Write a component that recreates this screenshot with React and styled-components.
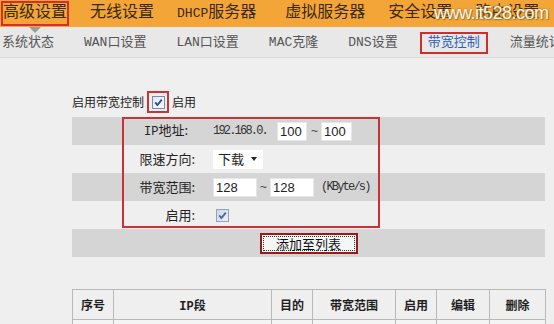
import React from 'react'
import styled, { createGlobalStyle } from 'styled-components'

const mono = `"Liberation Mono", "Noto Sans CJK SC", monospace`
const cjk = `"Noto Sans CJK SC", sans-serif`

const Global = createGlobalStyle`
  html, body { margin: 0; padding: 0; overflow: hidden; }
  body { background: #efefef; font-family: ${cjk}; }
`

const TopBar = styled.div`
  position: relative;
  height: 27px;
  background: #f4a537;
  display: flex;
  align-items: center;
  gap: 19px;
  padding-left: 1px;
  font-family: ${mono};
  font-size: 16px;
  line-height: 19px;
  color: #3a2912;
  white-space: nowrap;
  overflow: hidden;
`

const TopItem = styled.div`
  border: 2px solid ${p => (p.$active ? '#d3302b' : 'transparent')};
  padding: 1px 0;
  margin-right: ${p => p.$mr || 0}px;
`

const Lat = styled.span`
  font-family: "Liberation Mono", monospace;
  font-size: ${p => p.$size || 13}px;
`

const Watermark = styled.div`
  position: absolute;
  left: 434px;
  top: 4px;
  font-family: "Liberation Sans", sans-serif;
  font-size: 18px;
  color: #fff7e8;
  text-shadow: 0 0 2px #9a6a20, 1px 1px 1px #b07a2a;
  letter-spacing: -0.5px;
`

const SubBar = styled.div`
  position: relative;
  height: 31px;
  box-sizing: border-box;
  background: #e8e8e8;
  border-bottom: 1px solid #d8d8d8;
  display: flex;
  align-items: center;
  gap: 30px;
  padding-left: 2px;
  padding-top: 2px;
  font-family: ${mono};
  font-size: 13px;
  line-height: 16px;
  color: #555;
  white-space: nowrap;
  overflow: hidden;
`

const Pointer = styled.div`
  position: absolute;
  left: 29px;
  top: 0;
  width: 0;
  height: 0;
  border-left: 6px solid transparent;
  border-right: 6px solid transparent;
  border-top: 6px solid #9c9c9c;
`

const SubItem = styled.div`
  ${p =>
    p.$active &&
    `
    color: #2f5fb8;
    border: 2px solid #cf2e2e;
    padding: 1px 6px;
    margin: 0 -8px;
  `}
`

const Main = styled.div`
  padding: 0 9px 0 72px;
  font-size: 12px;
  color: #222;
`

const EnableLine = styled.div`
  margin-top: 33px;
  height: 22px;
  display: flex;
  align-items: center;
  font-size: 12px;
  line-height: 14px;
`

const RedFrame = styled.div`
  display: flex;
  align-items: center;
  justify-content: center;
  width: 22px;
  height: 22px;
  box-sizing: border-box;
  border: 2px solid #cc3434;
  margin: 0 3px;
`

const Rows = styled.div`
  position: relative;
  margin-top: 4px;
`

const Row = styled.div`
  height: 28px;
  display: flex;
  align-items: center;
  justify-content: ${p => (p.$center ? 'center' : 'flex-start')};
  background: ${p => (p.$shade ? '#d5d5d5' : 'transparent')};
`

const Label = styled.div`
  width: 123px;
  text-align: right;
  padding-right: ${p => p.$pr || 0}px;
  box-sizing: border-box;
  font-size: 13px;
  line-height: 16px;
  color: #222;
  flex: none;
`

const Value = styled.div`
  margin-left: ${p => p.$ml || 18}px;
  display: flex;
  align-items: center;
`

const Small = styled.span`
  font-family: "Liberation Mono", monospace;
  font-size: 12px;
  letter-spacing: -1.8px;
  color: #333;
  margin-left: ${p => p.$ml || 0}px;
`

const Input = styled.div`
  width: ${p => p.$w}px;
  height: 19px;
  background: #fff;
  box-sizing: border-box;
  border: 1px solid #e6e6e6;
  font-family: "Liberation Sans", sans-serif;
  font-size: 13px;
  line-height: 17px;
  padding-left: 2px;
  color: #222;
  margin-left: ${p => p.$ml || 0}px;
`

const Tilde = styled.span`
  font-family: "Liberation Sans", sans-serif;
  font-size: 12px;
  color: #444;
  margin-left: ${p => p.$ml || 0}px;
`

const Select = styled.div`
  width: 50px;
  height: 19px;
  background: #fff;
  display: flex;
  align-items: center;
  justify-content: space-between;
  padding: 0 6px 0 5px;
  box-sizing: border-box;
  font-size: 13px;
  line-height: 16px;
  &::after {
    content: '';
    border-left: 3.5px solid transparent;
    border-right: 3.5px solid transparent;
    border-top: 4px solid #222;
  }
`

const Highlight = styled.div`
  position: absolute;
  left: 50px;
  top: 0;
  width: 258px;
  height: 111px;
  box-sizing: border-box;
  border: 2px solid #c93236;
  pointer-events: none;
`

const Button = styled.div`
  width: 98px;
  height: 21px;
  box-sizing: border-box;
  border: 2px solid #961b1b;
  background: #f6f6f6;
  padding: 1px;
  div {
    height: 100%;
    box-sizing: border-box;
    border: 1px dotted #333;
    font-size: 13px;
    line-height: 14px;
    text-align: center;
    color: #111;
  }
`

const Table = styled.table`
  margin-top: 32px;
  width: 473px;
  border-collapse: collapse;
  table-layout: fixed;
  th, td {
    border: 1px solid #b9b9b9;
    height: 29px;
    padding: 0;
    text-align: center;
    font-size: 12px;
    font-weight: 700;
    color: #1f1f1f;
  }
  td { background: #f4f4f4; }
`

const Check = ({ dim }) => (
  <svg width="13" height="13" viewBox="0 0 13 13">
    <defs>
      <linearGradient id={dim ? 'cbd' : 'cb'} x1="0" y1="0" x2="1" y2="1">
        <stop offset="0" stopColor={dim ? '#cfd6e2' : '#dfe6f2'} />
        <stop offset="1" stopColor={dim ? '#eef1f6' : '#ffffff'} />
      </linearGradient>
    </defs>
    <rect x="0.5" y="0.5" width="12" height="12" fill={`url(#${dim ? 'cbd' : 'cb'})`} stroke={dim ? '#8fa3bf' : '#6f8fb8'} />
    <path d="M3.2 6.4 L5.4 9 L9.8 3.6" fill="none" stroke={dim ? '#4a66a0' : '#2a4c9c'} strokeWidth="1.8" />
  </svg>
)

const cols = [41, 158, 41, 83, 41, 53, 56]

export default function App() {
  return (
    <>
      <Global />
      <TopBar>
        <TopItem $active>高级设置</TopItem>
        <TopItem>无线设置</TopItem>
        <TopItem $mr={6}><Lat $size={13}>DHCP</Lat>服务器</TopItem>
        <TopItem>虚拟服务器</TopItem>
        <TopItem>安全设置</TopItem>
        <TopItem>路由设置</TopItem>
        <Watermark>www.it528.com</Watermark>
      </TopBar>
      <SubBar>
        <Pointer />
        <SubItem>系统状态</SubItem>
        <SubItem>WAN口设置</SubItem>
        <SubItem>LAN口设置</SubItem>
        <SubItem>MAC克隆</SubItem>
        <SubItem>DNS设置</SubItem>
        <SubItem $active>带宽控制</SubItem>
        <SubItem>流量统计</SubItem>
      </SubBar>
      <Main>
        <EnableLine>
          启用带宽控制
          <RedFrame><Check /></RedFrame>
          启用
        </EnableLine>
        <Rows>
          <Row $shade>
            <Label $pr={7}><Lat $size={12}>IP</Lat>地址:</Label>
            <Value>
              <Small>192.168.0.</Small>
              <Input $w={30} $ml={10}>100</Input>
              <Tilde $ml={4}>~</Tilde>
              <Input $w={31} $ml={3}>100</Input>
            </Value>
          </Row>
          <Row>
            <Label>限速方向:</Label>
            <Value><Select>下载</Select></Value>
          </Row>
          <Row $shade>
            <Label>带宽范围:</Label>
            <Value>
              <Input $w={44}>128</Input>
              <Tilde $ml={3}>~</Tilde>
              <Input $w={44} $ml={3}>128</Input>
              <Small $ml={7}>(KByte/s)</Small>
            </Value>
          </Row>
          <Row>
            <Label>启用:</Label>
            <Value $ml={21}><Check dim /></Value>
          </Row>
          <Row $shade $center>
            <Button><div>添加至列表</div></Button>
          </Row>
          <Highlight />
        </Rows>
        <Table>
          <colgroup>
            {cols.map((w, i) => <col key={i} style={{ width: w }} />)}
          </colgroup>
          <thead>
            <tr>
              <th>序号</th>
              <th><Lat $size={12}>IP</Lat>段</th>
              <th>目的</th>
              <th>带宽范围</th>
              <th>启用</th>
              <th>编辑</th>
              <th>删除</th>
            </tr>
          </thead>
          <tbody>
            <tr>{cols.map((w, i) => <td key={i} />)}</tr>
          </tbody>
        </Table>
      </Main>
    </>
  )
}
